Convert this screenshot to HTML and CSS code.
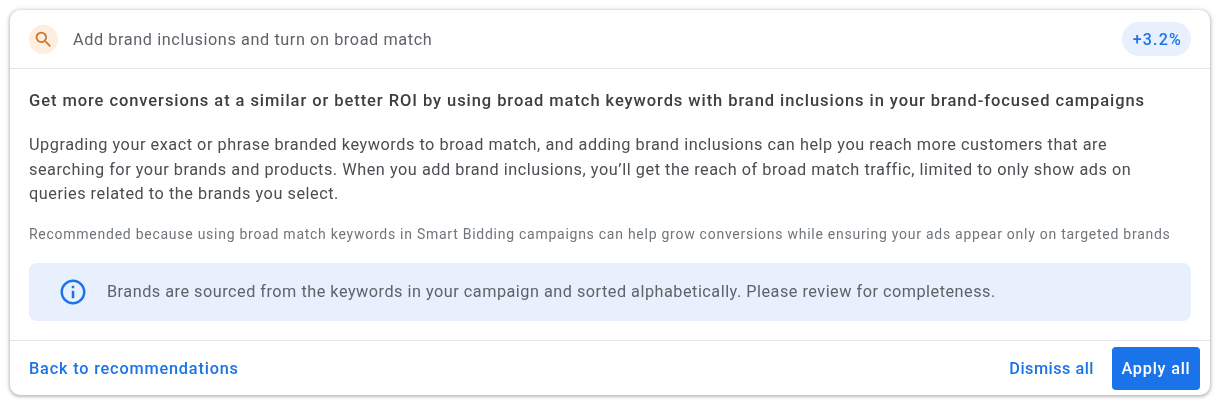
FILE: index.html
```html
<!DOCTYPE html>
<html lang="en">
<head>
<meta charset="utf-8">
<title>Recommendation</title>
<link rel="stylesheet" href="styles.css">
</head>
<body>
<section class="card">
  <header class="head">
    <span class="badge-icon">
      <svg width="21" height="21" viewBox="0 0 24 24" fill="#d0752c"><path d="M15.5 14h-.79l-.28-.27A6.47 6.47 0 0 0 16 9.5 6.5 6.5 0 1 0 9.5 16c1.61 0 3.09-.59 4.23-1.57l.27.28v.79l5 4.99L20.49 19l-4.99-5zm-6 0C7.01 14 5 11.99 5 9.5S7.01 5 9.5 5 14 7.01 14 9.5 11.99 14 9.5 14z"/></svg>
    </span>
    <span class="head-title">Add brand inclusions and turn on broad match</span>
    <span class="uplift">+3.2%</span>
  </header>
  <div class="body">
    <h2 class="headline">Get more conversions at a similar or better ROI by using broad match keywords with brand inclusions in your brand-focused campaigns</h2>
    <p class="desc">Upgrading your exact or phrase branded keywords to broad match, and adding brand inclusions can help you reach more customers that are searching for your brands and products. When you add brand inclusions, you’ll get the reach of broad match traffic, limited to only show ads on queries related to the brands you select.</p>
    <p class="reason">Recommended because using broad match keywords in Smart Bidding campaigns can help grow conversions while ensuring your ads appear only on targeted brands</p>
    <div class="notice">
      <svg class="info" width="30" height="30" viewBox="0 0 24 24" fill="#1a73e8"><path d="M11 7h2v2h-2zm0 4h2v6h-2zm1-9C6.48 2 2 6.48 2 12s4.48 10 10 10 10-4.48 10-10S17.52 2 12 2zm0 18c-4.41 0-8-3.59-8-8s3.59-8 8-8 8 3.59 8 8-3.59 8-8 8z"/></svg>
      <span>Brands are sourced from the keywords in your campaign and sorted alphabetically. Please review for completeness.</span>
    </div>
  </div>
  <footer class="foot">
    <a class="link back" href="#">Back to recommendations</a>
    <div class="actions">
      <a class="link dismiss" href="#">Dismiss all</a>
      <button class="apply" type="button">Apply all</button>
    </div>
  </footer>
</section>
</body>
</html>
```

FILE: styles.css
```css
* { box-sizing: border-box; }
html, body { margin: 0; padding: 0; background: #fff; }
body { padding: 10px; font-family: Roboto, "Liberation Sans", sans-serif; color: #3c4043; }
.card {
  width: 1200px;
  height: 385px;
  background: #fff;
  border-radius: 10px;
  box-shadow: 0 1px 3px 1px rgba(60, 64, 67, .3), 0 0 8px rgba(60, 64, 67, .08);
  display: flex;
  flex-direction: column;
  filter: blur(.6px);
}
.head {
  height: 59px;
  display: flex;
  align-items: center;
  padding: 0 19px;
  border-bottom: 1px solid #e3e5ea;
}
.badge-icon {
  width: 29px;
  height: 29px;
  border-radius: 50%;
  background: #fdeee0;
  display: flex;
  align-items: center;
  justify-content: center;
  flex: none;
}
.head-title { margin-left: 15px; font-size: 16.25px; letter-spacing: .59px; color: #5f6368; }
.uplift {
  margin-left: auto;
  height: 34px;
  padding: 0 9px 0 11px;
  border-radius: 17px;
  background: #e8f0fe;
  color: #1a73e8;
  font-size: 16px;
  font-weight: 500;
  letter-spacing: 1.2px;
  display: flex;
  align-items: center;
}
.body { flex: 1; padding: 0 19px; min-height: 0; border-bottom: 1px solid #e3e5ea; }
.headline { margin: 22px 0 0; font-size: 16.5px; line-height: 20px; font-weight: 500; letter-spacing: .93px; color: #3c4043; white-space: nowrap; }
.desc { margin: 22px 0 0; font-size: 16.25px; line-height: 24.5px; letter-spacing: .54px; color: #4a4e52; width: 1130px; }
.reason { margin: 17px 0 0; font-size: 14px; line-height: 20px; letter-spacing: .74px; color: #70757a; white-space: nowrap; }
.notice {
  margin-top: 19px;
  height: 58px;
  display: flex;
  align-items: center;
  padding: 0 0 0 28.5px;
  border-radius: 8px;
  background: #e8f0fe;
  font-size: 16.25px;
  letter-spacing: .5px;
  color: #5f6368;
}
.info { flex: none; margin-right: 19.5px; }
.foot {
  height: 54px;
  display: flex;
  align-items: center;
  justify-content: space-between;
  padding: 0 10px 0 19px;
}
.actions { display: flex; align-items: center; gap: 18px; }
.link { color: #1a73e8; text-decoration: none; font-size: 16.25px; font-weight: 500; }
.back { letter-spacing: .83px; }
.dismiss { letter-spacing: .5px; }
.apply {
  width: 88px;
  height: 43px;
  border: 0;
  border-radius: 4px;
  background: #1a73e8;
  color: #fff;
  font: 500 16.25px Roboto, "Liberation Sans", sans-serif;
  letter-spacing: .78px;
  padding: 0;
}
```
